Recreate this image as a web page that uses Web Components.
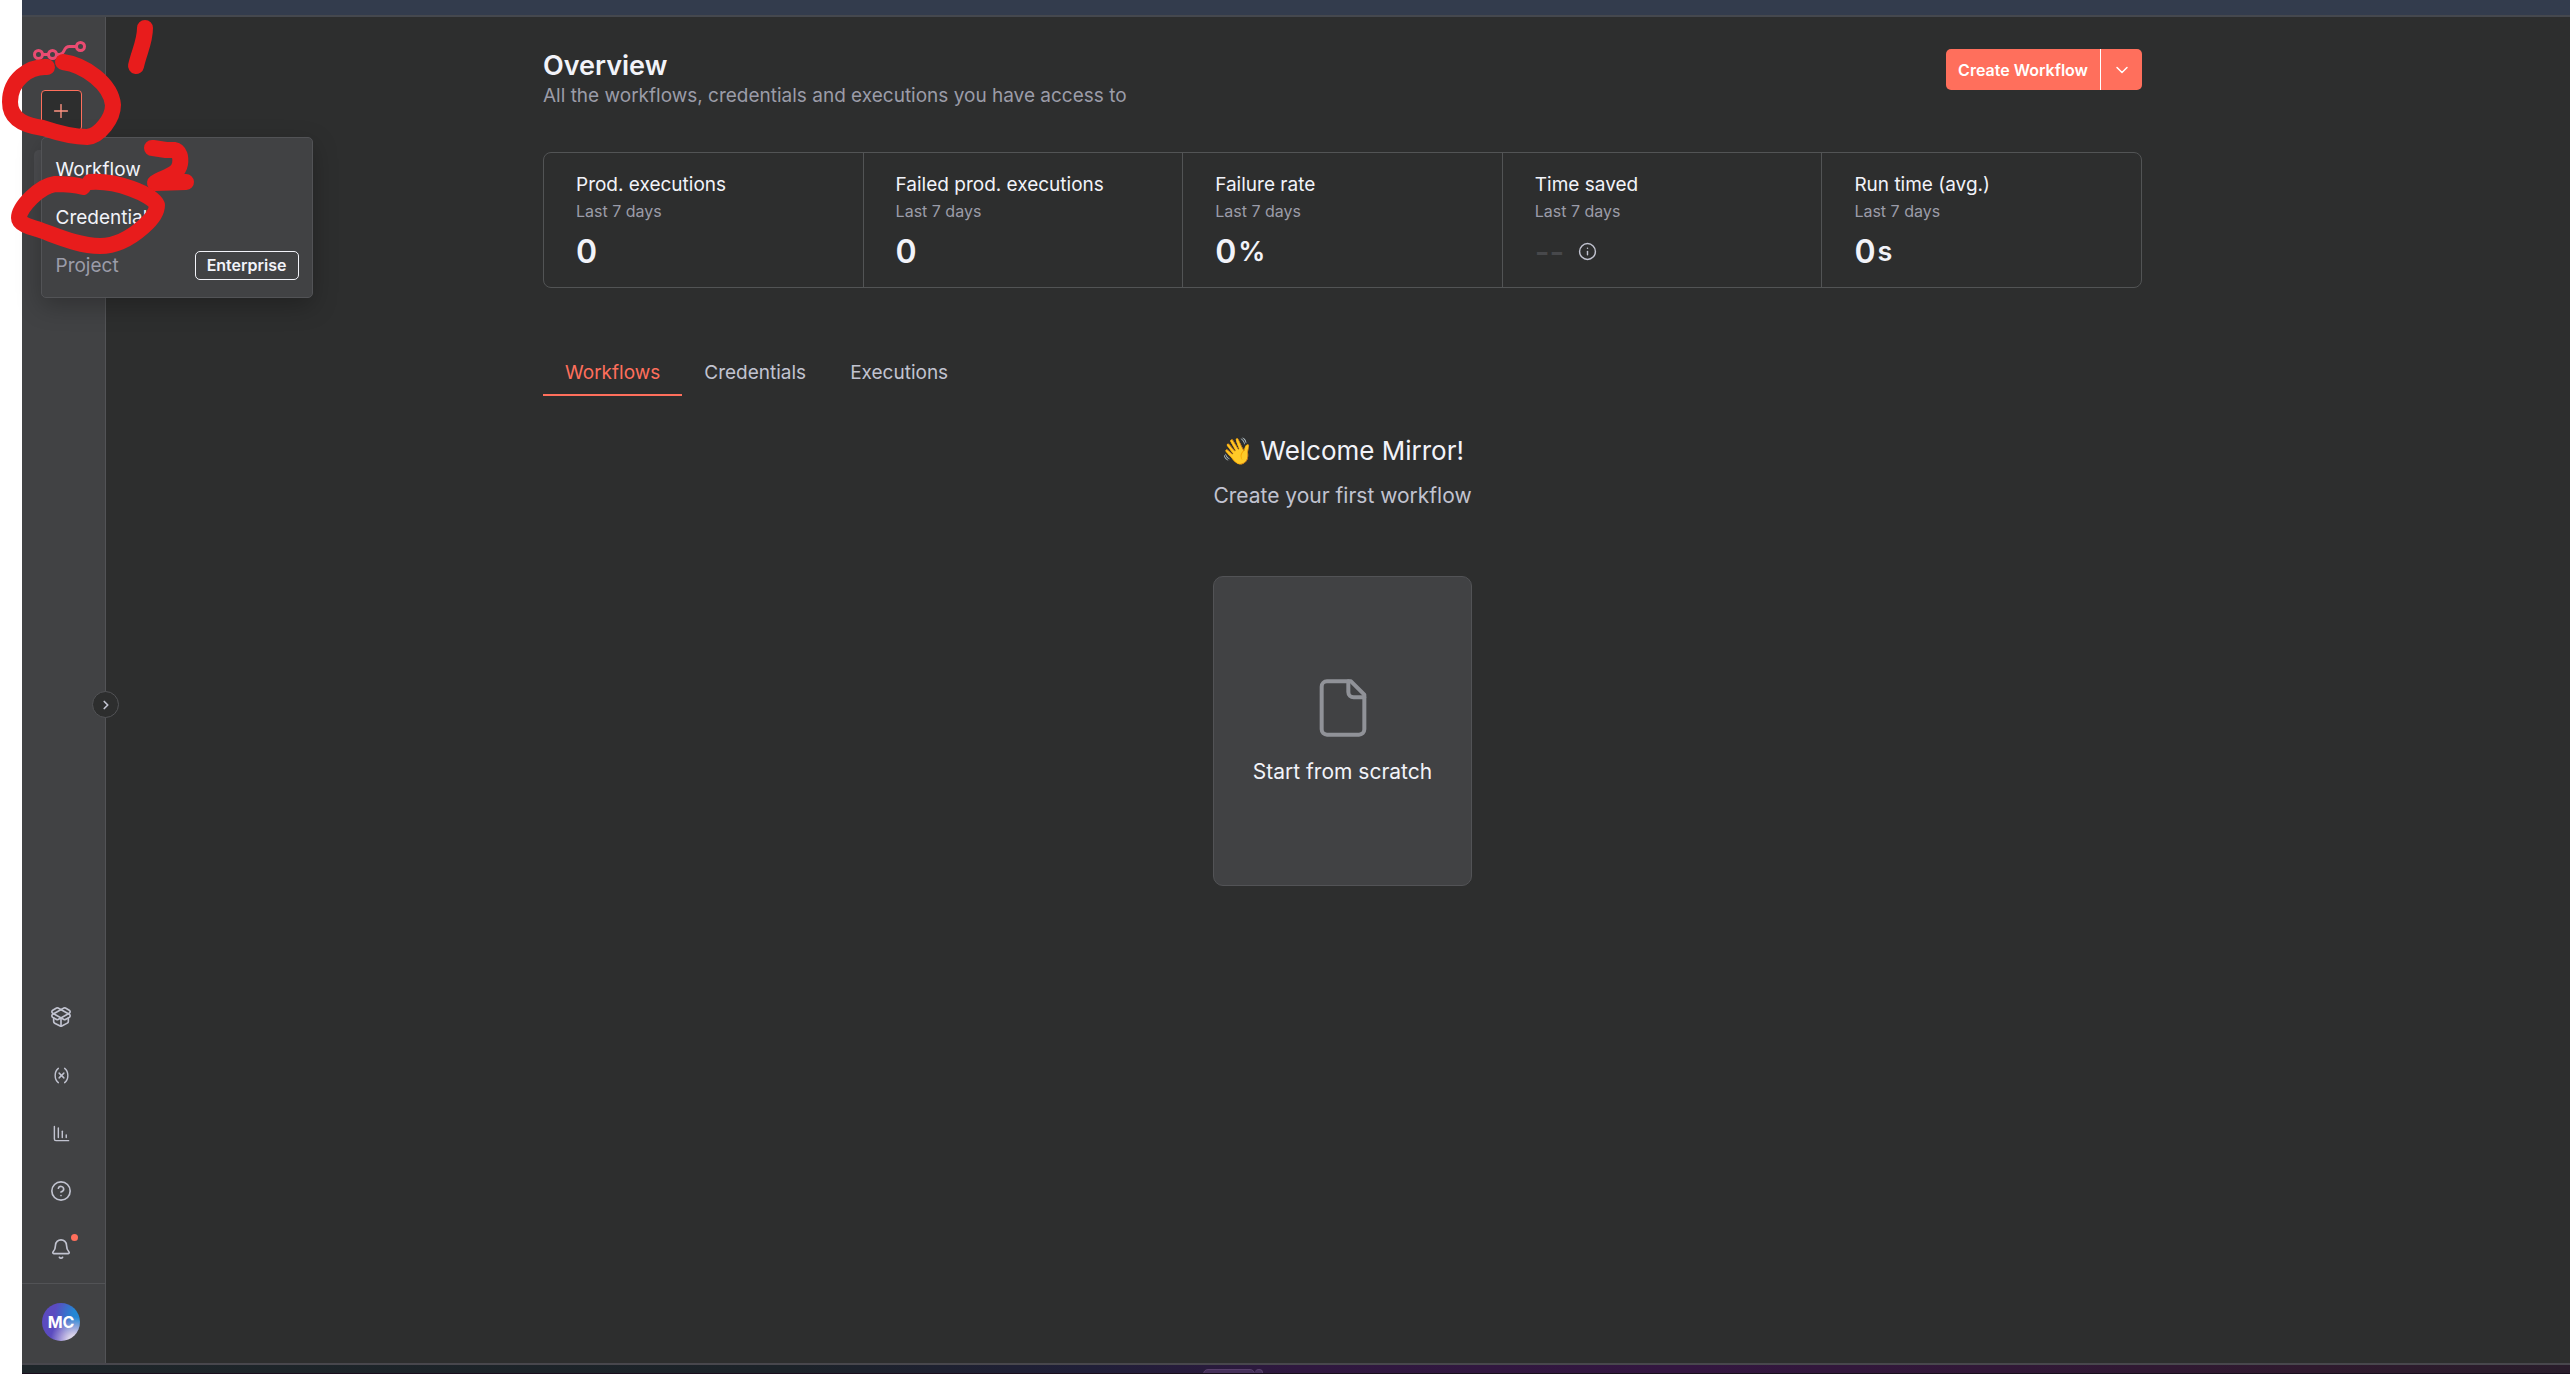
<!DOCTYPE html>
<html lang="en">
<head>
<meta charset="utf-8">
<meta name="viewport" content="width=device-width, initial-scale=1">
<title>Overview</title>
<style>
html, body { margin: 0; }
body {
  background: #fff;
  font-family: Inter, "Liberation Sans", sans-serif;
  font-size: 19px;
  --page: #2d2e2e;
  --panel: #414244;
  --line: #525356;
  --line-soft: #525455;
  --strong: #f2f3f9;
  --base: #c1c3d0;
  --muted: #9b9ca8;
  --accent: #ff6f5c;
}
</style>
</head>
<body>
<app-window></app-window>
<script>
const define = (name, html, setup) => {
  const template = document.createElement('template');
  template.innerHTML = html;
  customElements.define(name, class extends HTMLElement {
    constructor() {
      super();
      this.attachShadow({ mode: 'open' }).append(template.content.cloneNode(true));
    }
    connectedCallback() { if (setup) setup(this, this.shadowRoot); }
  });
};

const RESET = `:host,*{box-sizing:border-box}button{font:inherit;color:inherit;background:none;border:0;padding:0;margin:0;cursor:pointer}`;

const ICONS = {
  package: '<path d="M12 22v-9"/><path d="M15.17 2.21a1.67 1.67 0 0 1 1.63 0L21 4.57a1.93 1.93 0 0 1 0 3.36L8.82 14.79a1.655 1.655 0 0 1-1.64 0L3 12.43a1.93 1.93 0 0 1 0-3.36z"/><path d="M20 13v3.87a2.06 2.06 0 0 1-1.11 1.83l-6 3.08a1.93 1.93 0 0 1-1.78 0l-6-3.08A2.06 2.06 0 0 1 4 16.87V13"/><path d="M21 12.43a1.93 1.93 0 0 0 0-3.36L8.83 2.2a1.64 1.64 0 0 0-1.63 0L3 4.57a1.93 1.93 0 0 0 0 3.36l12.18 6.86a1.636 1.636 0 0 0 1.63 0z"/>',
  variable: '<path d="M8 21s-4-3-4-9 4-9 4-9"/><path d="M16 3s4 3 4 9-4 9-4 9"/><path d="m15 9-6 6"/><path d="m9 9 6 6"/>',
  chart: '<path d="M13 17V9"/><path d="M18 17v-3"/><path d="M3 3v16a2 2 0 0 0 2 2h16"/><path d="M8 17V5"/>',
  help: '<circle cx="12" cy="12" r="10"/><path d="M9.09 9a3 3 0 0 1 5.83 1c0 2-3 3-3 3"/><path d="M12 17h.01"/>',
  bell: '<path d="M10.268 21a2 2 0 0 0 3.464 0"/><path d="M3.262 15.326A1 1 0 0 0 4 17h16a1 1 0 0 0 .74-1.673C19.41 13.956 18 12.499 18 8A6 6 0 0 0 6 8c0 4.499-1.411 5.956-2.738 7.326"/>',
  plus: '<path d="M5 12h14"/><path d="M12 5v14"/>',
  down: '<path d="m6 9 6 6 6-6"/>',
  right: '<path d="m9 18 6-6-6-6"/>',
  info: '<circle cx="12" cy="12" r="10"/><path d="M12 16v-4"/><path d="M12 8h.01"/>',
  file: '<path d="M15 2H6a2 2 0 0 0-2 2v16a2 2 0 0 0 2 2h12a2 2 0 0 0 2-2V7Z"/><path d="M14 2v4a2 2 0 0 0 2 2h4"/>'
};

define('ui-icon', `
<style>
:host { display: block; flex: none; width: var(--size, 22px); height: var(--size, 22px); }
svg { display: block; width: 100%; height: 100%; fill: none; stroke: currentColor; stroke-width: var(--stroke, 1.8); stroke-linecap: round; stroke-linejoin: round; }
</style>
<svg viewBox="0 0 24 24" aria-hidden="true"></svg>`, (el, root) => {
  root.querySelector('svg').innerHTML = ICONS[el.getAttribute('name')];
});

define('brand-logo', `
<style>
:host { display: block; width: 58px; height: 30px; }
svg { display: block; fill: none; stroke: #ea4b71; stroke-width: 3; }
</style>
<svg width="58" height="30" viewBox="0 0 58 30" role="img" aria-label="Home">
  <circle cx="6.5" cy="13.5" r="4"/><circle cx="20.5" cy="13.5" r="4"/>
  <circle cx="48.5" cy="5.5" r="4"/><circle cx="41.5" cy="21.5" r="4"/>
  <path d="M10.500 13.500h6M24.500 13.500h3c6 0 3-8 10-8h7M27.500 13.500c5 0 4 8 10 8"/>
</svg>`);

define('create-menu', `
<style>${RESET}
:host { display: block; position: relative; }
.trigger { display: grid; place-items: center; width: 41px; height: 41px; border: 1px solid var(--accent); border-radius: 4px; background: var(--page); color: #ff9482; --size: 22px; --stroke: 1.5; }
.menu { position: absolute; z-index: 5; top: 47px; left: 0; width: 272px; padding: 7px 0 8px; background: var(--panel); border: 1px solid var(--line); border-radius: 5px; box-shadow: 0 8px 24px rgba(0,0,0,.25); }
.menu button { display: flex; align-items: center; justify-content: space-between; width: 100%; height: 48px; padding: 0 13px 0 14px; color: var(--strong); text-align: left; line-height: 27px; }
.menu button:disabled { color: var(--muted); }
.tag { padding: 0 11px; border: 1px solid var(--strong); border-radius: 5px; color: var(--strong); font-size: 16px; font-weight: 600; line-height: 27px; }
</style>
<button class="trigger" aria-label="Create" aria-expanded="true"><ui-icon name="plus"></ui-icon></button>
<div class="menu" role="menu">
  <button role="menuitem">Workflow</button>
  <button role="menuitem">Credential</button>
  <button role="menuitem" disabled>Project<span class="tag">Enterprise</span></button>
</div>`);

define('side-bar', `
<style>${RESET}
:host { display: flex; flex-direction: column; position: relative; flex: none; width: 84px; background: var(--panel); border-right: 1px solid var(--line); color: var(--base); }
.top { display: flex; flex-direction: column; align-items: center; gap: 19px; padding: 24px 5px 0 0; }
.current { width: 54px; height: 41px; border-radius: 5px; background: #4c4d50; }
nav { display: flex; flex-direction: column; margin-top: auto; padding: 0 5px 5px 0; }
nav button { display: grid; place-items: center; height: 58px; position: relative; }
.small { --size: 19px; --stroke: 1.8; }
.dot { position: absolute; top: 14px; left: 49px; width: 7px; height: 7px; border-radius: 50%; background: var(--accent); }
.user { display: flex; justify-content: center; padding: 19px 5px 22px 0; border-top: 1px solid var(--line); }
.avatar { width: 38px; height: 38px; border-radius: 50%; background: radial-gradient(circle at 85% 100%, #d9d3ea 0 12%, transparent 48%), radial-gradient(circle at 100% 30%, #2487d4 0 15%, transparent 55%), #5b4bc0; color: #fff; font-size: 16px; font-weight: 700; line-height: 38px; }
.toggle { position: absolute; top: 674px; right: -14px; display: grid; place-items: center; width: 27px; height: 27px; border: 1px solid var(--line); border-radius: 50%; background: var(--page); --size: 14px; --stroke: 3; }
</style>
<div class="top">
  <brand-logo></brand-logo>
  <create-menu></create-menu>
  <div class="current"></div>
</div>
<nav aria-label="Main">
  <button aria-label="Templates"><ui-icon name="package"></ui-icon></button>
  <button class="small" aria-label="Variables"><ui-icon name="variable"></ui-icon></button>
  <button class="small" aria-label="Insights"><ui-icon name="chart"></ui-icon></button>
  <button aria-label="Help"><ui-icon name="help"></ui-icon></button>
  <button aria-label="What's new"><ui-icon name="bell"></ui-icon><span class="dot"></span></button>
</nav>
<div class="user"><button class="avatar">MC</button></div>
<button class="toggle" aria-label="Expand"><ui-icon name="right"></ui-icon></button>`);

define('page-header', `
<style>${RESET}
:host { display: flex; justify-content: space-between; align-items: flex-start; }
h1 { margin: 0; padding-top: 1px; color: var(--strong); font-size: 27px; line-height: 32px; font-weight: 600; }
p { margin: 0; color: var(--muted); line-height: 28px; }
.split { display: flex; height: 41px; border-radius: 5px; overflow: hidden; background: var(--accent); color: #fff; font-size: 16px; font-weight: 600; }
.split button { padding: 0 12px; }
.split button + button { display: grid; place-items: center; width: 42px; padding: 0; border-left: 1px solid #fff; --size: 20px; --stroke: 1.8; }
</style>
<div><h1><slot name="title"></slot></h1><p><slot></slot></p></div>
<div class="split"><button>Create Workflow</button><button aria-label="More"><ui-icon name="down"></ui-icon></button></div>`);

define('stat-card', `
<style>${RESET}
:host { display: block; flex: 1; padding: 18px 32px 9px; border-left: 1px solid var(--line-soft); }
:host(:first-of-type) { border-left: 0; }
.label { color: var(--strong); line-height: 27px; }
.range { color: var(--muted); font-size: 16px; line-height: 27px; }
.value { display: flex; align-items: center; height: 53px; gap: 2px; color: var(--strong); font-size: 32px; font-weight: 600; line-height: 53px; }
</style>
<div class="label"><slot name="label"></slot></div>
<div class="range">Last 7 days</div>
<div class="value"><slot></slot></div>`);

define('stat-row', `
<style>
:host { display: flex; margin-top: 42px; border: 1px solid var(--line-soft); border-radius: 8px; }
.unit { font-size: 27px; }
.none { color: #47484b; font-size: 32px; font-weight: 500; }
.tip { --size: 19px; color: var(--base); padding-left: 12px; font-weight: 400; }
</style>
<stat-card><span slot="label">Prod. executions</span><span>0</span></stat-card>
<stat-card><span slot="label">Failed prod. executions</span><span>0</span></stat-card>
<stat-card><span slot="label">Failure rate</span><span>0</span><span class="unit">%</span></stat-card>
<stat-card><span slot="label">Time saved</span><span class="none">--</span><span class="tip"><ui-icon name="info"></ui-icon></span></stat-card>
<stat-card><span slot="label">Run time (avg.)</span><span>0</span><span class="unit">s</span></stat-card>`);

define('tab-bar', `
<style>
:host { display: flex; margin-top: 71px; }
a { padding: 0 22px 8px; border-bottom: 2px solid transparent; color: var(--base); line-height: 27px; text-decoration: none; }
a[aria-current] { color: var(--accent); border-color: var(--accent); }
</style>
<a href="#workflows" aria-current="page">Workflows</a><a href="#credentials">Credentials</a><a href="#executions">Executions</a>`);

define('empty-state', `
<style>${RESET}
:host { display: flex; flex-direction: column; align-items: center; margin-top: 37px; }
h2 { margin: 0; color: var(--strong); font-size: 26px; line-height: 36px; font-weight: 400; }
p { margin: 13px 0 66px; color: var(--base); font-size: 21px; line-height: 28px; }
.card { display: flex; flex-direction: column; align-items: center; justify-content: center; gap: 18px; width: 259px; height: 310px; border: 1px solid var(--line); border-radius: 10px; background: var(--panel); color: var(--strong); font-size: 21px; line-height: 28px; }
ui-icon { --size: 64px; --stroke: 1.5; color: #909298; }
</style>
<h2>👋 Welcome Mirror!</h2>
<p>Create your first workflow</p>
<button class="card"><ui-icon name="file"></ui-icon><span>Start from scratch</span></button>`);

define('overview-page', `
<style>
:host { display: block; flex: 1; padding: 32px 0 0 9px; background: var(--page); }
.inner { max-width: 1599px; margin: 0 auto; }
</style>
<main class="inner">
  <page-header><span slot="title">Overview</span>All the workflows, credentials and executions you have access to</page-header>
  <stat-row></stat-row>
  <tab-bar></tab-bar>
  <empty-state></empty-state>
</main>`);

define('task-bar', `
<style>
:host { display: flex; justify-content: center; height: 9px; padding-right: 127px; overflow: hidden; background: linear-gradient(90deg, #1e262a 0, #1c2329 30%, #201f38 42%, #2f183f 50%, #331640 65%, #2f1a2e 90%, #291d2b 100%); border-bottom: 1px solid #190d1c; box-sizing: border-box; }
i { box-sizing: border-box; width: 52px; height: 12px; margin: 4px 0 0; border: 1px solid #58406b; border-radius: 5px; background: #45305a; }
i + i { width: 8px; border-left: 0; }
</style>
<i></i><i></i>`);

define('pen-marks', `
<style>
:host { position: absolute; z-index: 10; top: 0; left: 0; pointer-events: none; }
svg { display: block; fill: none; stroke: #e81c1c; stroke-width: 16; stroke-linecap: round; stroke-linejoin: round; }
</style>
<svg width="220" height="270" viewBox="0 0 220 270" aria-hidden="true">
  <path d="M47 67C29 66 10 80 10 102C10 121 28 126 43 128C58 133 72 137 87 137C100 136 113 118 113 105C111 84 85 65 63 62"/>
  <path d="M145 28C145 42 139 52 136 66"/>
  <path d="M152 148h1M153 148L166 150L174 150C180 151 181 158 180 164C178 176 163 177 155 183L186 182"/>
  <path d="M83 187C74 184 64 184 55 184C40 186 19 207 19 218C19 224 30 227 37 229C55 235 78 246 100 246C118 246 134 235 143 227C150 221 157 213 157 205C152 194 116 180 90 182"/>
</svg>`);

define('app-window', `
<style>
:host { display: flex; flex-direction: column; min-height: 100vh; padding-left: 22px; box-sizing: border-box; position: relative; }
.title { height: 15px; background: #333c4d; border-bottom: 2px solid #45484e; }
.body { display: flex; flex: 1; border-bottom: 2px solid #48474d; }
</style>
<div class="title"></div>
<div class="body"><side-bar></side-bar><overview-page></overview-page></div>
<task-bar></task-bar>
<pen-marks></pen-marks>`);
</script>
</body>
</html>
